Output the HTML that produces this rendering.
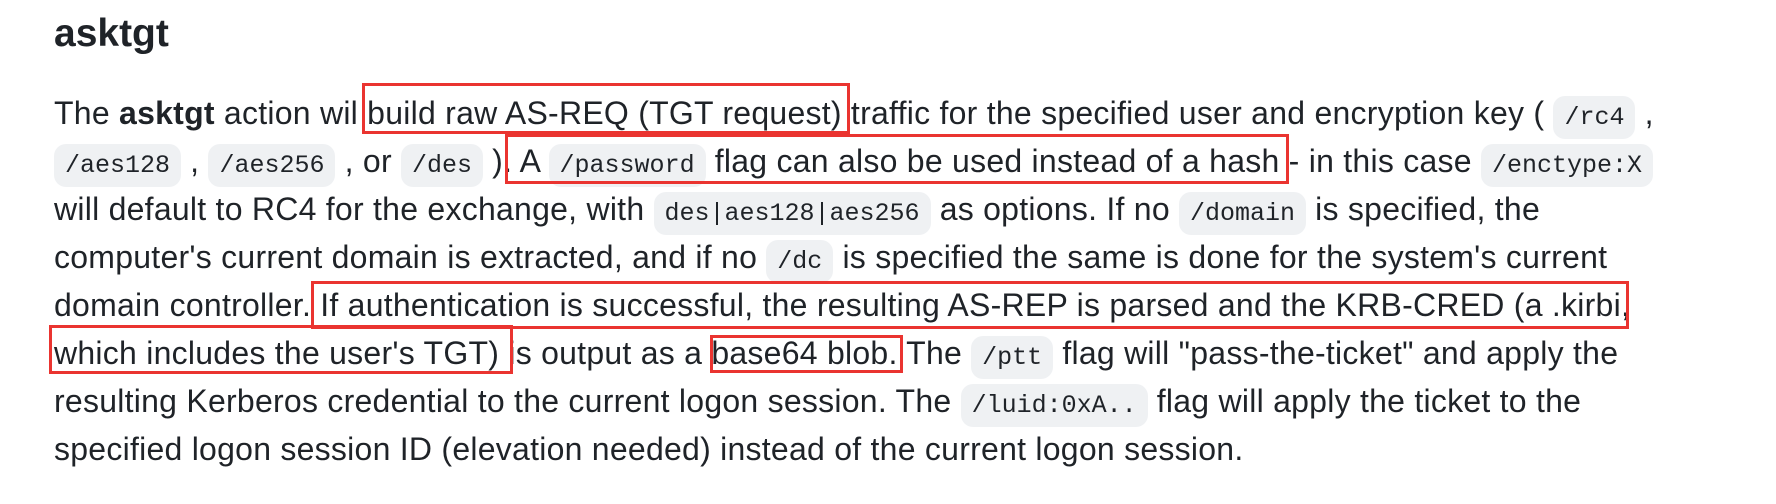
<!DOCTYPE html>
<html><head><meta charset="utf-8"><style>
html,body{margin:0;padding:0;background:#fff;width:1776px;height:504px;overflow:hidden}
body{font-family:"Liberation Sans",sans-serif;color:#1f2328;position:relative}
h3{position:absolute;left:54px;top:10px;margin:0;font-size:39px;font-weight:bold;line-height:48px}
.p{position:absolute;left:54px;top:89px;font-size:32px;letter-spacing:0.25px;line-height:48px;white-space:nowrap}
.l{height:48px}
code{font-family:"Liberation Mono",monospace;font-size:25px;letter-spacing:0;background:#eff1f3;border-radius:12px;padding:7px 11px}
.b{position:absolute;border:3px solid #ea3430;box-sizing:border-box}
</style></head><body>
<h3>asktgt</h3>
<div class="p">
<div class="l">The <b>asktgt</b> action wil build raw AS-REQ (TGT request) traffic for the specified user and encryption key ( <code>/rc4</code> ,</div>
<div class="l"><code>/aes128</code> , <code>/aes256</code> , or <code>/des</code> ). A <code>/password</code> flag can also be used instead of a hash - in this case <code>/enctype:X</code></div>
<div class="l">will default to RC4 for the exchange, with <code>des|aes128|aes256</code> as options. If no <code>/domain</code> is specified, the</div>
<div class="l">computer's current domain is extracted, and if no <code>/dc</code> is specified the same is done for the system's current</div>
<div class="l">domain controller. If authentication is successful, the resulting AS-REP is parsed and the KRB-CRED (a .kirbi,</div>
<div class="l">which includes the user's TGT) is output as a base64 blob. The <code>/ptt</code> flag will "pass-the-ticket" and apply the</div>
<div class="l">resulting Kerberos credential to the current logon session. The <code>/luid:0xA..</code> flag will apply the ticket to the</div>
<div class="l">specified logon session ID (elevation needed) instead of the current logon session.</div>
</div>
<div class="b" style="left:362px;top:83px;width:488px;height:51px"></div>
<div class="b" style="left:505px;top:134px;width:784px;height:50px"></div>
<div class="b" style="left:311px;top:281px;width:1318px;height:48px"></div>
<div class="b" style="left:49px;top:325px;width:464px;height:49px"></div>
<div class="b" style="left:710px;top:335px;width:193px;height:38px"></div>
</body></html>
